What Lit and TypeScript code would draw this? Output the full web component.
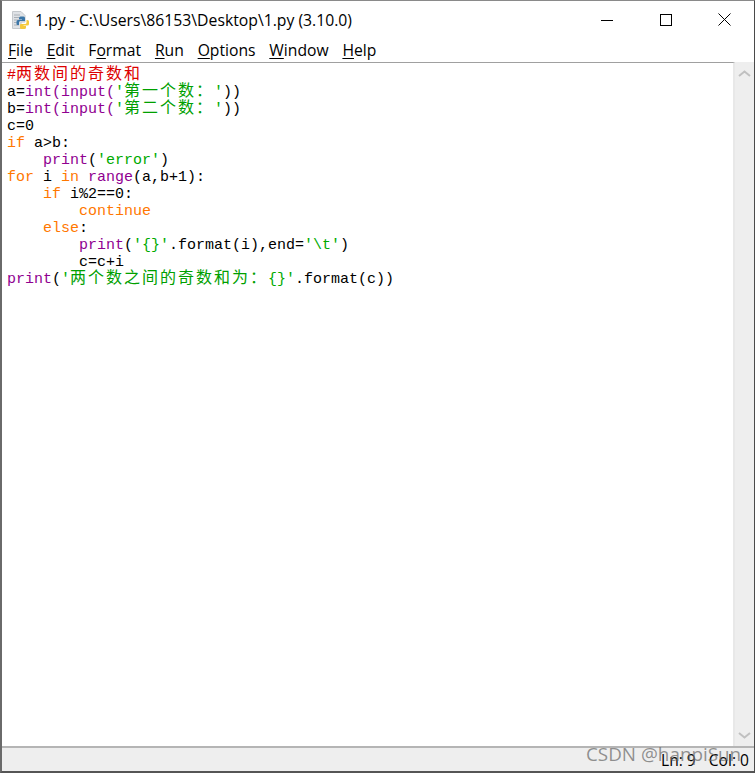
import { LitElement, html, css, TemplateResult } from "lit";
import { customElement } from "lit/decorators.js";

type Seg = [string, string];
const lines: Seg[][] = [
  [["r", "#"], ["rc", "两数间的奇数和"]],
  [["k", "a="], ["p", "int(input("], ["g", "'"], ["gc", "第一个数："], ["g", "'"], ["k", "))"]],
  [["k", "b="], ["p", "int(input("], ["g", "'"], ["gc", "第二个数："], ["g", "'"], ["k", "))"]],
  [["k", "c=0"]],
  [["o", "if"], ["k", " a>b:"]],
  [["k", "    "], ["p", "print"], ["k", "("], ["g", "'error'"], ["k", ")"]],
  [["o", "for"], ["k", " i "], ["o", "in"], ["k", " "], ["p", "range"], ["k", "(a,b+1):"]],
  [["k", "    "], ["o", "if"], ["k", " i%2==0:"]],
  [["k", "        "], ["o", "continue"]],
  [["k", "    "], ["o", "else"], ["k", ":"]],
  [["k", "        "], ["p", "print"], ["k", "("], ["g", "'{}'"], ["k", ".format(i),end="], ["g", "'\\t'"], ["k", ")"]],
  [["k", "        c=c+i"]],
  [["p", "print"], ["k", "("], ["g", "'"], ["gc", "两个数之间的奇数和为："], ["g", "{}'"], ["k", ".format(c))"]],
];

@customElement("app-root")
export class AppRoot extends LitElement {
  static styles = css`
    :host { display: block; width: 755px; height: 773px; position: relative; overflow: hidden; background: #fff; font-family: "Open Sans", "Noto Sans", sans-serif; }
    .win { height: 773px; box-sizing: border-box; display: flex; flex-direction: column; border-left: 2px solid #6a6a6a; border-right: 1px solid #4a4a4a; border-bottom: 2px solid #555; border-top: 1px solid #8a8a8a; }
    .title { height: 37px; flex: none; display: flex; align-items: center; background: #fff; }
    .title svg.logo { margin-left: 8px; flex: none; }
    .title .t { margin-left: 5px; font: 15.75px "Open Sans", sans-serif; color: #000; white-space: pre; }
    .caps { margin-left: auto; display: flex; align-items: center; }
    .caps svg { display: block; }
    .cap { width: 59px; height: 37px; display: flex; align-items: center; justify-content: center; }
    .menu { height: 24px; box-sizing: border-box; padding-top: 1px; flex: none; display: flex; font: 15.7px "Open Sans", sans-serif; color: #000; padding-left: 6px; gap: 13.8px; align-items: flex-start; line-height: 23px; background: #fff; }
    .menu u { text-underline-offset: 2px; text-decoration-thickness: 1px; }
    .mid { flex: 1; display: flex; min-height: 0; }
    .editor { flex: 1; border-top: 1px solid #a0a0a0; border-right: 2px solid #e8e8e8; background: #fff; padding: 4px 0 0 5px; }
    .line { height: 17px; line-height: 17px; white-space: pre; font-family: "Liberation Mono", monospace; font-size: 15px; }
    .k { color: #000; } .p { color: #900090; } .o { color: #ff7700; } .g { color: #00aa00; } .r { color: #dd0000; }
    .gc, .rc { font-family: "Noto Sans CJK SC", sans-serif; font-size: 16px; letter-spacing: 2px; line-height: 0; }
    .gc { color: #00a000; } .rc { color: #dd0000; }
    .sb { width: 19px; flex: none; background: #eeeeee; display: flex; flex-direction: column; justify-content: space-between; align-items: center; padding: 8px 0 7px; }
    .status { height: 25px; flex: none; background: #eeeeee; border-top: 2px solid #b5b5b5; display: flex; justify-content: flex-end; align-items: center; gap: 13px; font: 15.6px "Open Sans", sans-serif; color: #000; padding-right: 5px; box-sizing: border-box; line-height: 22px; white-space: pre; }
    .wm { position: absolute; left: 586px; top: 741px; font: 18.85px "Open Sans", sans-serif; color: rgba(110,110,110,0.75); white-space: pre; }
  `;

  private line(segs: Seg[]): TemplateResult {
    return html`<div class="line">${segs.map(([c, t]) => html`<span class=${c}>${t}</span>`)}</div>`;
  }

  render() {
    return html`
      <div class="win">
        <div class="title">
          <svg class="logo" width="20" height="20" viewBox="0 0 20 20">
            <path d="M2.500 1.500H11l4 4V12H11v6.500H2.500z" fill="#dfe2e6" stroke="#c4c8cc" stroke-width="1"/>
            <path d="M4 5h6M4 7.500h5M4 10h5M4 12.500h5M4 15h5" stroke="#aab0b6" stroke-width="1"/>
            <path d="M10.500 6.500h3a1.500 1.500 0 0 1 1.500 1.500v3h-4.500a1.500 1.500 0 0 0-1.500 1.500V15H7.500a1 1 0 0 1-1-1v-2.500a1.500 1.500 0 0 1 1.500-1.500h4V9.500H9V8a1.500 1.500 0 0 1 1.500-1.500z" fill="#3b76a8"/>
            <path d="M16.500 10h1a1.500 1.500 0 0 1 1.500 1.500V14a1.500 1.500 0 0 1-1.500 1.500h-4v.5H16v1.500a1.500 1.500 0 0 1-1.500 1.500h-3a1.500 1.500 0 0 1-1.500-1.500V15a1 1 0 0 1 1-1h4a1.500 1.500 0 0 0 1.500-1.500z" fill="#f4c93c"/>
          </svg>
          <span class="t">1.py - C:\\Users\\86153\\Desktop\\1.py (3.10.0)</span>
          <div class="caps">
            <div class="cap"><svg width="12" height="12" viewBox="0 0 12 12"><path d="M0 6.500h12" stroke="#000" fill="none"/></svg></div>
            <div class="cap"><svg width="12" height="12" viewBox="0 0 12 12"><rect x=".5" y=".5" width="11" height="11" stroke="#000" fill="none"/></svg></div>
            <div class="cap"><svg width="13" height="13" viewBox="0 0 13 13"><path d="M.5.5l12 12M12.500.5l-12 12" stroke="#000" fill="none"/></svg></div>
          </div>
        </div>
        <div class="menu">
          <span><u>F</u>ile</span><span><u>E</u>dit</span><span>F<u>o</u>rmat</span><span><u>R</u>un</span><span><u>O</u>ptions</span><span><u>W</u>indow</span><span><u>H</u>elp</span>
        </div>
        <div class="mid">
          <div class="editor">${lines.map((l) => this.line(l))}</div>
          <div class="sb">
            <svg width="13" height="7" viewBox="0 0 13 7"><path d="M1 6l5.500-4.500L12 6" stroke="#c0c0c0" stroke-width="2" fill="none"/></svg>
            <svg width="13" height="7" viewBox="0 0 13 7"><path d="M1 1l5.500 4.500L12 1" stroke="#c0c0c0" stroke-width="2" fill="none"/></svg>
          </div>
        </div>
        <div class="status"><span>Ln: 9</span><span>Col: 0</span></div>
      </div>
      <div class="wm">CSDN @hanpiSun</div>
    `;
  }
}
